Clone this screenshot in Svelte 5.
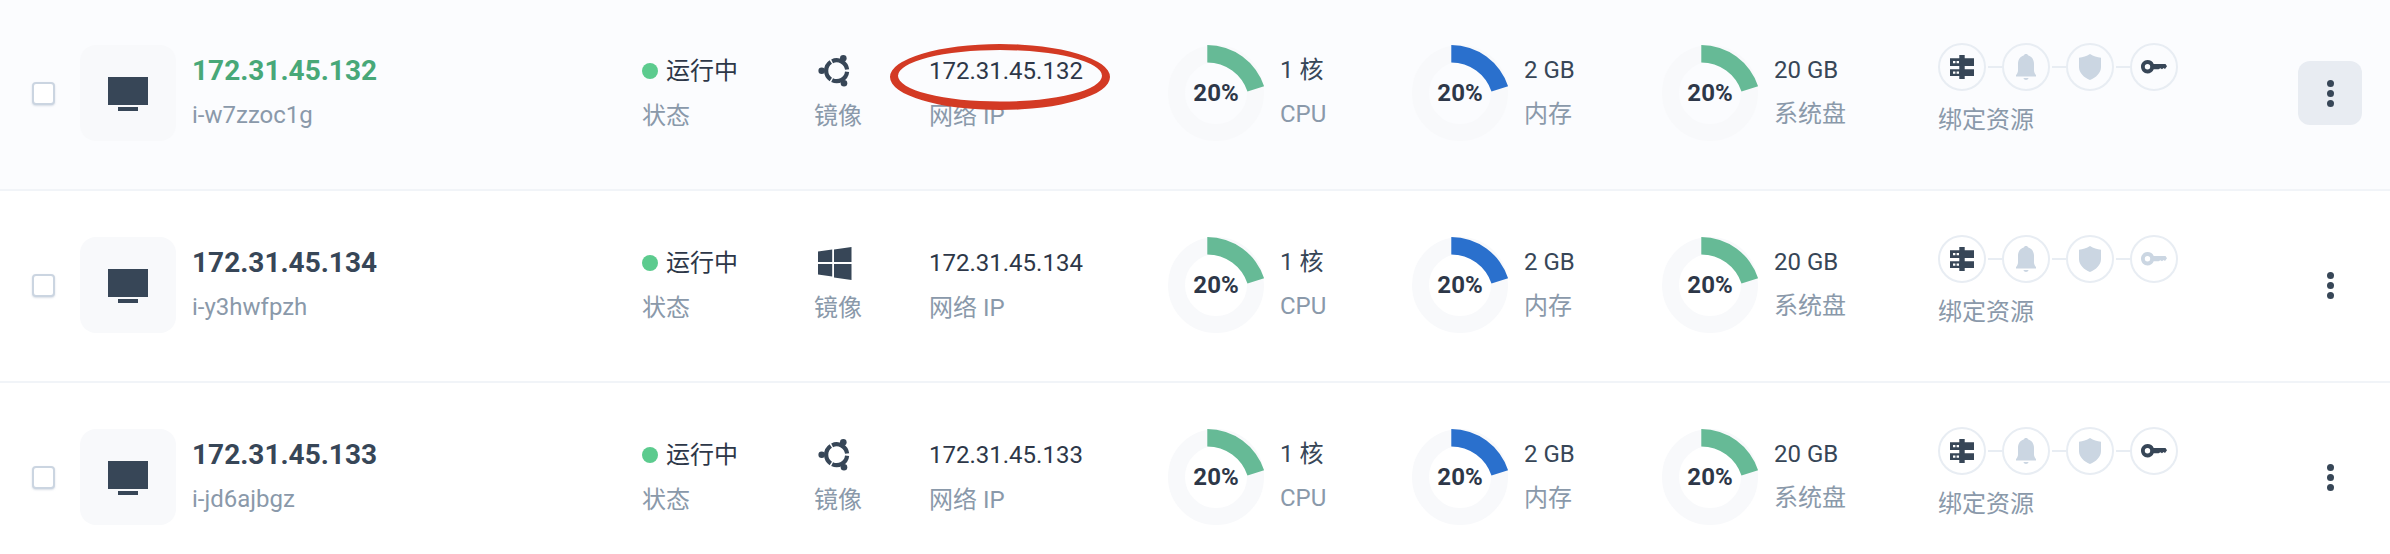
<script>
  const hosts = [
    { ip: '172.31.45.132', id: 'i-w7zzoc1g', os: 'ubuntu', key: true, active: true },
    { ip: '172.31.45.134', id: 'i-y3hwfpzh', os: 'windows', key: false, active: false },
    { ip: '172.31.45.133', id: 'i-jd6ajbgz', os: 'ubuntu', key: true, active: false }
  ];

  const meters = [
    { value: '1 核', label: 'CPU', color: '#66ba96' },
    { value: '2 GB', label: '内存', color: '#2a70cd' },
    { value: '20 GB', label: '系统盘', color: '#66ba96' }
  ];
</script>

<div class="list">
  {#each hosts as host}
    <div class="row" class:active={host.active}>
      <span class="check"></span>

      <div class="thumb">
        <svg width="40" height="34" viewBox="0 0 40 34">
          <rect width="40" height="28" fill="#374657" />
          <rect x="10" y="30" width="20" height="4" fill="#374657" />
        </svg>
      </div>

      <div class="cell name-cell">
        <div class="name">{host.ip}</div>
        <div class="label id">{host.id}</div>
      </div>

      <div class="cell">
        <div class="value status"><i class="dot"></i>运行中</div>
        <div class="label">状态</div>
      </div>

      <div class="cell">
        <div class="value os">
          {#if host.os === 'ubuntu'}
            <svg width="34" height="34" viewBox="0 0 34 34" fill="#374657">
              <g fill="none" stroke="#374657" stroke-width="4.2">
                <path d="M31.1 15.6A10.5 10.5 0 0 0 16.1 7.3" />
                <path d="M31.1 17.8A10.5 10.5 0 0 1 16.1 26.1" />
                <path d="M14.8 8A10.5 10.5 0 0 0 14.8 25.4" />
              </g>
              <circle cx="5.7" cy="16.7" r="3.3" />
              <circle cx="27.3" cy="4.3" r="3.3" />
              <circle cx="28" cy="29.3" r="3.3" />
            </svg>
          {:else}
            <svg width="36" height="36" viewBox="0 0 36 36" fill="#374657">
              <path d="M2 6.6 16.2 4.6V17H2zM18 4.4 35.5 2V17H18zM2 19H16.2V31.4L2 29.4zM18 19H35.5V35L18 32.6z" />
            </svg>
          {/if}
        </div>
        <div class="label">镜像</div>
      </div>

      <div class="cell ip-cell">
        <div class="value">{host.ip}</div>
        <div class="label">网络 IP</div>
        {#if host.active}
          <!-- hand-drawn marker round the address, thinner along the top -->
          <svg class="circled" width="224" height="70" viewBox="0 0 224 70">
            <path
              fill="#d33a24"
              fill-rule="evenodd"
              d="M2 35A110 33 0 1 1 222 35 110 33 0 1 1 2 35ZM10 33.8A102 25.8 0 1 0 214 33.8 102 25.8 0 1 0 10 33.8Z"
            />
          </svg>
        {/if}
      </div>

      {#each meters as m}
        <div class="meter">
          <div class="donut">
            <svg width="96" height="96" viewBox="0 0 96 96">
              <circle cx="48" cy="48" r="39.5" fill="none" stroke="#f8f9fb" stroke-width="17" />
              <path d="M39.3 0A59.7 59.7 0 0 1 96.1 41.3L79.5 46.6A42.3 42.3 0 0 0 39.3 17.4Z" fill={m.color} />
            </svg>
            <span class="pct">20%</span>
          </div>
          <div class="meter-text">
            <div class="meter-value">{m.value}</div>
            <div class="label">{m.label}</div>
          </div>
        </div>
      {/each}

      <div class="bind">
        <div class="chain">
          <span class="node">
            <svg width="24" height="24" viewBox="0 0 24 24">
              <path fill="#374657" d="M9.3 0H14.7V3.3H24V11H14.7V14.3H24V21H14.7V24H9.3V21H0V14.3H9.3V11H0V3.3H9.3Z" />
              <path fill="#fff" d="M3 6H5.4V8.2H3zM6.6 6H9V8.2H6.6zM3 16.6H5.4V18.8H3zM6.6 16.6H9V18.8H6.6z" />
            </svg>
          </span>
          <i class="link"></i>
          <span class="node">
            <svg width="22" height="26" viewBox="0 0 22 26" fill="#cbd6e2">
              <path d="M11 0C12.2 0 13 .6 13.3 1.6 17 2.6 19 6 19 10V16.5C19 18.4 20 20 21 21V22.6H1V21C2 20 3 18.4 3 16.5V10C3 6 5 2.6 8.7 1.6 9 .6 9.8 0 11 0Z" />
              <path d="M8.4 24H13.6C13.2 25.3 12.2 26 11 26S8.8 25.3 8.4 24Z" />
            </svg>
          </span>
          <i class="link"></i>
          <span class="node">
            <svg width="22" height="26" viewBox="0 0 22 26" fill="#cbd6e2">
              <path d="M11 0C14.5 2.2 18 3.4 22 3.8V13C22 19 17 23.6 11 26 5 23.6 0 19 0 13V3.8C4 3.4 7.5 2.2 11 0Z" />
            </svg>
          </span>
          <i class="link"></i>
          <span class="node">
            <svg width="26" height="14" viewBox="0 0 26 14" fill={host.key ? '#374657' : '#cbd6e2'}>
              <path fill-rule="evenodd" d="M6.5 0C9.4 0 11.8 1.6 12.7 3.9H24.5L26 6.2 24 9 22.6 8 21 9.2 19.4 8.2 17.6 9.2H12.7C11.8 11.8 9.4 13.4 6.5 13.4 2.9 13.4 0 10.4 0 6.7S2.9 0 6.5 0ZM6.5 4A2.7 2.7 0 1 0 6.5 9.4 2.7 2.7 0 1 0 6.5 4Z" />
            </svg>
          </span>
        </div>
        <div class="label">绑定资源</div>
      </div>

      <button class="more">
        <i></i><i></i><i></i>
      </button>
    </div>
  {/each}
</div>

<style>
  :global(body) {
    background: #fff;
    overflow: hidden;
  }

  .list {
    margin-top: -1px;
    font-family: Roboto, 'Noto Sans CJK SC', sans-serif;
  }

  .row {
    display: grid;
    grid-template-columns: 48px 112px 450px 172px 115px 239px 244px 250px 276px 360px 64px;
    align-items: center;
    padding: 46px 28px 48px 32px;
    border-bottom: 2px solid #f1f4f8;
  }

  .row.active {
    background: #fbfcfe;
  }

  .check {
    width: 23px;
    height: 23px;
    box-sizing: border-box;
    background: #fff;
    border: 2px solid #cbd5e1;
    border-radius: 4px;
    box-shadow: 0 1px 2px rgba(160, 175, 195, 0.4);
  }

  .thumb {
    width: 96px;
    height: 96px;
    display: flex;
    align-items: center;
    justify-content: center;
    background: #f8f9fb;
    border-radius: 16px;
  }

  .thumb svg {
    margin-top: 2px;
  }

  .cell {
    position: relative;
    display: flex;
    flex-direction: column;
    gap: 13px;
    padding-top: 1px;
  }

  .name-cell {
    gap: 12px;
    padding-bottom: 1px;
  }

  .name {
    font-size: 28px;
    line-height: 32px;
    font-weight: 700;
    color: #374657;
  }

  .active .name {
    color: #48a878;
  }

  .value {
    font-size: 24px;
    line-height: 32px;
    color: #2d3748;
  }

  .label {
    font-size: 24px;
    line-height: 32px;
    color: #8a99aa;
  }

  .status {
    display: flex;
    align-items: center;
  }

  .dot {
    width: 16px;
    height: 16px;
    margin-right: 8px;
    border-radius: 50%;
    background: #5ccb8e;
  }

  .os {
    height: 32px;
    display: flex;
    align-items: center;
  }

  .os svg {
    margin-left: 2px;
  }

  .circled {
    position: absolute;
    left: -41px;
    top: -12px;
  }

  .meter {
    display: flex;
    align-items: center;
    gap: 16px;
  }

  .donut {
    position: relative;
    width: 96px;
    height: 96px;
    flex: none;
  }

  .donut svg {
    display: block;
    overflow: visible;
  }

  .pct {
    position: absolute;
    inset: 0;
    display: flex;
    align-items: center;
    justify-content: center;
    font-size: 24px;
    font-weight: 700;
    color: #2d3748;
  }

  .meter-text {
    display: flex;
    flex-direction: column;
    gap: 12px;
    margin-top: -3px;
  }

  .meter-value {
    font-size: 24px;
    line-height: 32px;
    color: #374657;
  }

  .bind {
    display: flex;
    flex-direction: column;
    gap: 13px;
    margin-top: -7px;
  }

  .chain {
    display: flex;
    align-items: center;
  }

  .node {
    width: 48px;
    height: 48px;
    box-sizing: border-box;
    display: flex;
    align-items: center;
    justify-content: center;
    border: 2px solid #e8edf3;
    border-radius: 50%;
  }

  .link {
    width: 14px;
    height: 2px;
    margin: 0 0 0 2px;
    background: #e8edf3;
  }

  .more {
    width: 64px;
    height: 64px;
    display: flex;
    flex-direction: column;
    align-items: center;
    justify-content: center;
    gap: 3px;
    padding: 0;
    border: 0;
    border-radius: 12px;
    background: transparent;
  }

  .active .more {
    background: #e8ecf2;
  }

  .more i {
    width: 7px;
    height: 7px;
    border-radius: 50%;
    background: #374657;
  }
</style>
